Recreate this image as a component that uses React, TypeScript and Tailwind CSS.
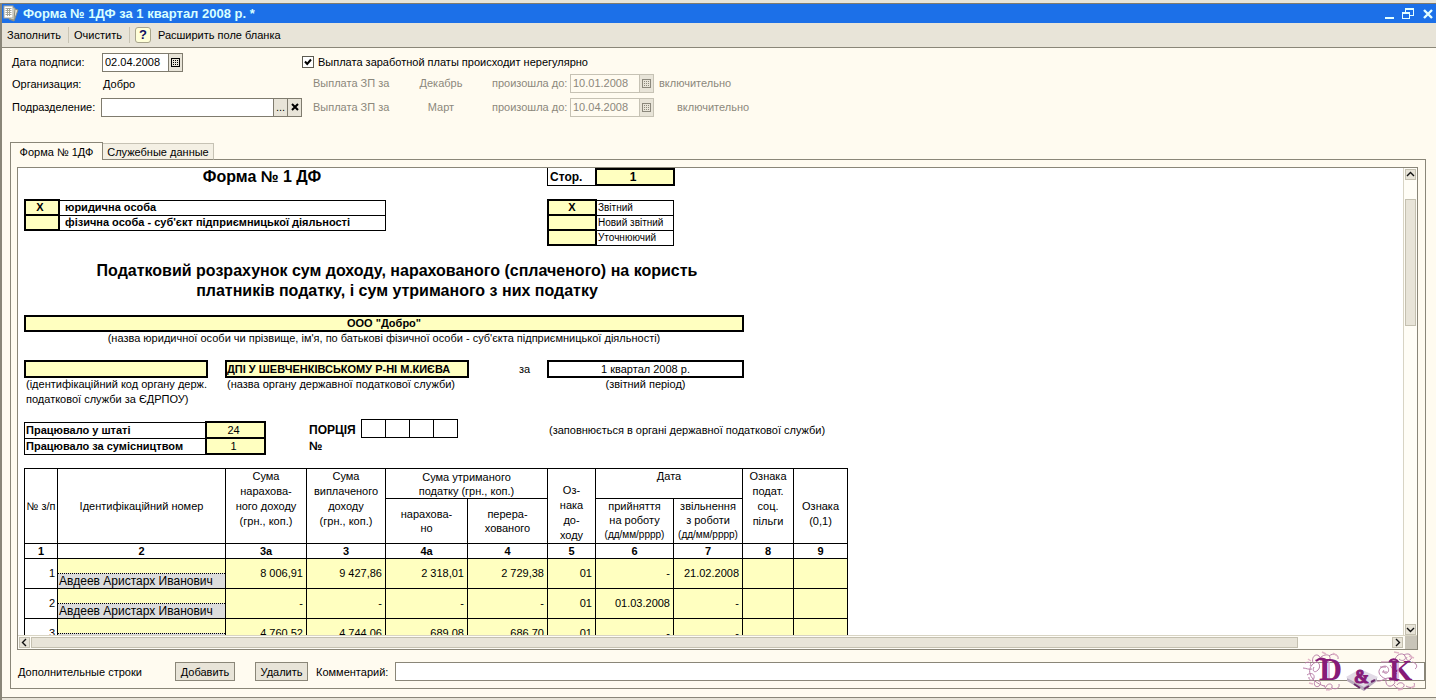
import { useState, type ReactNode } from "react";

type Row = { n: number; name: string; cells: string[] };

const ROWS: Row[] = [
  { n: 1, name: "Авдеев Аристарх Иванович", cells: ["8 006,91", "9 427,86", "2 318,01", "2 729,38", "01", "-", "21.02.2008", "", ""] },
  { n: 2, name: "Авдеев Аристарх Иванович", cells: ["-", "-", "-", "-", "01", "01.03.2008", "-", "", ""] },
  { n: 3, name: "", cells: ["4 760,52", "4 744,06", "689,08", "686,70", "01", "-", "-", "", ""] },
];

const COLUMN_NUMBERS = ["1", "2", "3а", "3", "4а", "4", "5", "6", "7", "8", "9"];

function CalendarIcon() {
  return (
    <svg width="9" height="9" viewBox="0 0 9 9" fill="none" stroke="currentColor" shapeRendering="crispEdges">
      <path d="M0 .5h9M.5 0v9M8.5 0v9M0 8.5h9" />
      <path d="M2 2.500h1M4 2.500h1M6 2.500h1M2 4.500h1M4 4.500h1M6 4.500h1M2 6.500h1M4 6.500h1M6 6.500h1" />
    </svg>
  );
}

function Chevron({ dir }: { dir: "up" | "down" | "left" | "right" }) {
  const d = {
    up: "M1 6l3.5-3.5L8 6",
    down: "M1 3l3.5 3.5L8 3",
    left: "M6 1L2.500 4.500 6 8",
    right: "M3 1l3.500 3.500L3 8",
  }[dir];
  return (
    <svg width="9" height="9" viewBox="0 0 9 9" fill="none" stroke="#111" strokeWidth="1.4">
      <path d={d} />
    </svg>
  );
}

function ScrollButton({ dir, label }: { dir: "up" | "down" | "left" | "right"; label: string }) {
  return (
    <button
      aria-label={label}
      className="flex h-[11px] w-[11px] shrink-0 items-center justify-center border border-[#c4c0b0] bg-[#e8e4d8]"
    >
      <Chevron dir={dir} />
    </button>
  );
}

function DateField({ id, value, disabled }: { id: string; value: string; disabled?: boolean }) {
  return (
    <div className={`flex h-[19px] border ${disabled ? "w-[84px] border-[#c6c2b4] text-[#8c887c]" : "w-[81px] border-[#7f7b6e] text-black"}`}>
      <input
        id={id}
        defaultValue={value}
        disabled={disabled}
        className={`min-w-0 flex-1 pl-[2px] outline-none ${disabled ? "bg-[#fffbf0]" : "bg-white"}`}
      />
      <button
        aria-label="Календарь"
        disabled={disabled}
        className={`flex w-[14px] items-center justify-center border-l bg-[#e8e4d8] ${disabled ? "border-[#c6c2b4]" : "border-[#7f7b6e]"}`}
      >
        <CalendarIcon />
      </button>
    </div>
  );
}

function PayRow({ id, month, date, wide }: { id: string; month: string; date: string; wide?: boolean }) {
  return (
    <div className="flex h-6 items-center pl-[11px] text-[#8c887c]">
      <span className="w-[90px]">Выплата ЗП за</span>
      <span className="w-[76px] text-center">{month}</span>
      <label htmlFor={id} className="w-[91px] pl-[13px]">произошла до:</label>
      <DateField id={id} value={date} disabled />
      <span className={wide ? "pl-[23px]" : "pl-[5px]"}>включительно</span>
    </div>
  );
}

function Head({ children, rows, cols, className = "align-middle" }: { children: ReactNode; rows?: number; cols?: number; className?: string }) {
  return (
    <th rowSpan={rows} colSpan={cols} className={`border border-black p-0 text-center font-normal whitespace-nowrap ${className}`}>
      {children}
    </th>
  );
}

function WindowIcon() {
  return (
    <svg width="16" height="17" viewBox="0 0 16 17">
      <path d="M9 3l6 2-4 11-5-2z" fill="#e4e0d0" stroke="#8d8d80" />
      <path d="M7 2l5 1-1 12-4-1z" fill="#f4f2e4" stroke="#8d8d80" />
      <rect x="1" y="1" width="9" height="12" fill="#fff" stroke="#a5a598" />
      <path d="M2.500 3.500h6M2.500 5.500h6M2.500 7.500h6M2.500 9.500h6M4.500 3v8M6.500 3v8" stroke="#a5a598" fill="none" />
    </svg>
  );
}

function Logo() {
  return (
    <svg width="120" height="44" viewBox="0 0 120 44" fill="none">
      <g stroke="#b97fa9">
        <path d="M22 36C10 32 4 22 10 15s10 1 6 5-6 0-4-3M11 13C9 7 14 3 17 6s-1 6-4 4M17 9c5-6 12-5 11 0s-7 4-5 0M27 6c5-4 10-1 9 3" />
        <path d="M3 13c4-2 7 0 5 3M1 18c3 0 6 2 9 1M5 25c4-3 8-1 7 3s-6 2-5-1M13 31c-2 4 1 7 4 5s1-6-1-5M22 35c2 6 7 6 8 2s-5-4-6 0M30 38c4 2 8 0 7-4" />
        <path d="M84 29c-8-3-9-9-4-12s8 2 6 5-6 0-4-2M79 12h7M78 17h6M80 22h5M93 10c1-6 8-8 10-4s-3 6-6 3M102 5c5-3 9 1 7 4s-6 1-4-2" />
        <path d="M84 29c-1 6 3 9 7 6s1-6-3-4M92 35c3 5 9 4 10 1s-5-5-7-1M104 36c5 3 10 1 8-3M110 12c5 1 6 5 3 7M75 31c5 1 8-4 14-3M88 15c3 4 5 8 7 9" />
      </g>
      <g stroke="#e3b6c8" strokeWidth="1.500">
        <path d="M20 2l4 2M31 3l4 3M6 9l3 2M7 33l4 1M24 40l6-1M92 2l5 1M107 6l5 2M96 40l5-1M109 38l4-2" />
      </g>
      <path d="M44 27l14-8 18 8-14 14z" fill="#e2dae6" />
      <path d="M45 28l17 9 13-9v3l-13 10-17-10z" fill="#b9acbd" />
      <path d="M52 34l6 4M62 39l5-3M69 32l4-2" stroke="#6d2a6b" strokeWidth="2" />
      <g fontFamily="'Liberation Serif', serif" fontWeight="700" fill="#861b78">
        <text x="17" y="30" fontSize="32">D</text>
        <text x="52" y="33" fontSize="18" stroke="#861b78">&amp;</text>
        <text x="87" y="30" fontSize="30">K</text>
      </g>
      <path d="M14 11c4-4 8-3 12 0M87 12c3-4 6-3 9-1M87 29c3-2 5 2 9 1" stroke="#861b78" strokeWidth="2" />
      <path d="M27 12v16M96 13v15" stroke="#d7a3d6" strokeWidth="1.500" />
    </svg>
  );
}

function Sheet() {
  return (
    <div className="w-[840px] pl-[6px] text-[11px] leading-[15px] text-black">
      <div className="flex h-[18px]">
        <h1 className="w-[523px] pr-[47px] text-center text-[16px] leading-[17px] font-bold">Форма № 1 ДФ</h1>
        <div className="w-12 border-b border-l border-black pl-[2px] text-[12px] leading-[18px] font-bold">Стор.</div>
        <div className="w-20 border-2 border-black bg-[#ffffc0] pr-1 text-center text-[12px] leading-[15px] font-bold">1</div>
      </div>

      <div className="mt-[13px] flex h-[46px] items-start">
        <table className="w-[362px] table-fixed border-collapse">
          <tbody>
            <tr className="h-[15px]">
              <td className="w-[34px] border-2 border-black bg-[#ffffc0] p-0 pr-1 text-center leading-[13px] font-bold">X</td>
              <td className="border border-black p-0 pl-[5px] leading-[13px] font-bold">юридична особа</td>
            </tr>
            <tr className="h-[15px]">
              <td className="border-2 border-black bg-[#ffffc0] p-0" />
              <td className="border border-black p-0 pl-[5px] leading-[13px] font-bold">фізична особа - суб'єкт підприємницької діяльності</td>
            </tr>
          </tbody>
        </table>
        <table className="ml-[161px] w-[127px] table-fixed border-collapse text-[10px]">
          <tbody>
            {["Звітний", "Новий звітний", "Уточнюючий"].map((kind, i) => (
              <tr key={kind} className="h-[15px]">
                <td className="w-12 border-2 border-black bg-[#ffffc0] p-0 text-center text-[11px] leading-[13px] font-bold">{i === 0 && "X"}</td>
                <td className="border border-black p-0 pl-px leading-[13px]">{kind}</td>
              </tr>
            ))}
          </tbody>
        </table>
      </div>

      <h2 className="mt-4 w-[746px] text-center text-[16px] leading-5 font-bold">
        Податковий розрахунок сум доходу, нарахованого (сплаченого) на користь
        <br />
        платників податку, і сум утриманого з них податку
      </h2>

      <div className="mt-[14px] h-[17px] w-[720px] border-2 border-black bg-[#ffffc0] text-center leading-[13px] font-bold">ООО "Добро"</div>
      <p className="w-[720px] text-center leading-[13px]">
        (назва юридичної особи чи прізвище, ім'я, по батькові фізичної особи - суб'єкта підприємницької діяльності)
      </p>

      <div className="mt-[15px] flex h-[46px]">
        <div className="w-[184px]">
          <div className="h-[18px] border-2 border-black bg-[#ffffc0]" />
          <p className="-mt-px pl-[2px] whitespace-nowrap">(ідентифікаційний код органу держ.<br />податкової служби за ЄДРПОУ)</p>
        </div>
        <div className="ml-[17px] w-[244px]">
          <div className="h-[18px] border-2 border-black bg-[#ffffc0] leading-[15px] font-bold whitespace-nowrap">ДПІ У ШЕВЧЕНКІВСЬКОМУ Р-НІ М.КИЄВА</div>
          <p className="-mt-px pl-[2px]">(назва органу державної податкової служби)</p>
        </div>
        <span className="w-[78px] pl-[50px] leading-[18px]">за</span>
        <div className="w-[197px] text-center">
          <div className="h-[18px] border-2 border-black leading-[15px]">1 квартал 2008 р.</div>
          <p className="-mt-px">(звітний період)</p>
        </div>
      </div>

      <div className="mt-[13px] flex h-[49px] items-start">
        <table className="mt-[2px] w-[242px] table-fixed border-collapse">
          <tbody>
            {[["Працювало у штаті", "24"], ["Працювало за сумісництвом", "1"]].map(([label, value]) => (
              <tr key={label} className="h-4">
                <td className="border border-black p-0 pl-px leading-[14px] font-bold">{label}</td>
                <td className="w-[59px] border-2 border-black bg-[#ffffc0] p-0 pr-1 text-center leading-[14px]">{value}</td>
              </tr>
            ))}
          </tbody>
        </table>
        <p className="ml-[43px] w-[52px] pt-[3px] text-[12px] leading-4 font-bold">ПОРЦІЯ<br />№</p>
        <div className="flex h-[19px] w-[97px] divide-x divide-black border border-black">
          <div className="flex-1" /><div className="flex-1" /><div className="flex-1" /><div className="flex-1" />
        </div>
        <p className="ml-[91px] pt-1">(заповнюється в органі державної податкової служби)</p>
      </div>

      <table className="w-[824px] table-fixed border-collapse">
        <colgroup>
          <col className="w-[33px]" />
          <col className="w-[168px]" />
          <col className="w-[81px]" />
          <col className="w-[79px]" />
          <col className="w-[82px]" />
          <col className="w-[80px]" />
          <col className="w-[48px]" />
          <col className="w-[78px]" />
          <col className="w-[69px]" />
          <col className="w-[51px]" />
          <col className="w-[54px]" />
        </colgroup>
        <thead>
          <tr className="h-[30px]">
            <Head rows={2}>№ з/п</Head>
            <Head rows={2}>Ідентифікаційний номер</Head>
            <Head rows={2} className="align-top">Сума<br />нарахова-<br />ного доходу<br />(грн., коп.)</Head>
            <Head rows={2} className="align-top">Сума<br />виплаченого<br />доходу<br />(грн., коп.)</Head>
            <Head cols={2} className="leading-[14px]">Сума утриманого<br />податку (грн., коп.)</Head>
            <Head rows={2} className="pt-[14px] align-top">Оз-<br />нака<br />до-<br />ходу</Head>
            <Head cols={2} className="align-top">Дата</Head>
            <Head rows={2} className="align-top">Ознака<br />подат.<br />соц.<br />пільги</Head>
            <Head rows={2} className="pt-[15px]">Ознака<br />(0,1)</Head>
          </tr>
          <tr className="h-[45px]">
            <Head className="leading-[14px]">нарахова-<br />но</Head>
            <Head className="leading-[14px]">перера-<br />хованого</Head>
            <Head className="align-top leading-[14px]">прийняття<br />на роботу<br /><span className="text-[10px]">(дд/мм/рррр)</span></Head>
            <Head className="align-top leading-[14px]">звільнення<br />з роботи<br /><span className="text-[10px]">(дд/мм/рррр)</span></Head>
          </tr>
          <tr className="h-[15px]">
            {COLUMN_NUMBERS.map((c) => (
              <th key={c} className="border border-black p-0 text-center leading-[14px] font-bold">{c}</th>
            ))}
          </tr>
        </thead>
        <tbody>
          {ROWS.map((row) => (
            <tr key={row.n} className="h-[30px]">
              <td className="border border-black p-0 pr-[2px] pb-[2px] text-right leading-[14px]">{row.n}</td>
              <td className="border border-black bg-[#ffffc0] p-0 align-bottom">
                <div className="h-[15px] border-t border-dotted border-black bg-[#dcdcdc] pl-px text-[12px] leading-[14px]">{row.name}</div>
              </td>
              {row.cells.map((cell, i) => (
                <td key={i} className="border border-black bg-[#ffffc0] p-0 pr-[3px] pb-[2px] text-right leading-[14px]">{cell}</td>
              ))}
            </tr>
          ))}
        </tbody>
      </table>
    </div>
  );
}

export default function App() {
  const [irregular, setIrregular] = useState(true);

  return (
    <div className="flex h-screen flex-col overflow-hidden bg-[#e8e4d8] pt-[3px] font-['Liberation_Sans',Arial,sans-serif] text-[11px] leading-4 text-black">
      <div className="flex min-h-0 flex-1 flex-col border-l-2 border-[#8a8678] bg-[#fffbf0]">
        <header className="flex h-5 shrink-0 items-center border-t border-[#7f7b6e] bg-[#1c70e8] pr-[2px] pl-px">
          <WindowIcon />
          <span className="ml-1 text-[13px] font-bold text-[#d8ffff]">Форма № 1ДФ за 1 квартал 2008 р. *</span>
          <div className="ml-auto flex items-center gap-2">
            <button aria-label="Свернуть" className="h-[11px] w-[9px] border-b-2 border-[#e4ffff]" />
            <button aria-label="Восстановить">
              <svg width="12" height="12" viewBox="0 0 12 12" fill="none" stroke="#e4ffff" shapeRendering="crispEdges">
                <path d="M3.500 4V1.500h8v6H8M3 .5h9M.5 4.500h7v6h-7zM0 5.500h8" />
              </svg>
            </button>
            <button aria-label="Закрыть">
              <svg width="12" height="12" viewBox="0 0 12 12" fill="none" stroke="#e4ffff" strokeWidth="2.400">
                <path d="M2 2l8 8M10 2l-8 8" />
              </svg>
            </button>
          </div>
        </header>

        <nav className="flex h-[25px] shrink-0 items-center border-b border-[#8a8678] bg-[#e8e4d8] pl-[5px]">
          <button>Заполнить</button>
          <button className="ml-[7px] border-l border-[#c8c4b4] pl-[5px]">Очистить</button>
          <div className="ml-[7px] flex border-l border-[#c8c4b4] pl-[5px]">
            <button aria-label="Справка" className="h-4 w-4 rounded-[3px] border border-[#a8a48c] bg-[#ffffd8] text-[13px] leading-[14px] font-bold text-[#101060]">?</button>
          </div>
          <button className="ml-[7px]">Расширить поле бланка</button>
        </nav>

        <div className="flex h-[94px] shrink-0 pt-[3px] pl-[10px] whitespace-nowrap">
          <div className="w-[290px]">
            <div className="flex h-[22px] items-center">
              <label htmlFor="sign-date" className="w-[90px]">Дата подписи:</label>
              <DateField id="sign-date" value="02.04.2008" />
            </div>
            <div className="flex h-[22px] items-center">
              <span className="w-[91px]">Организация:</span>
              <span>Добро</span>
            </div>
            <div className="flex h-6 items-center">
              <label htmlFor="department" className="w-[89px]">Подразделение:</label>
              <div className="flex h-[19px] w-[201px] border border-[#7f7b6e]">
                <input id="department" className="min-w-0 flex-1 bg-white pl-[2px] outline-none" />
                <button aria-label="Выбрать" className="w-[14px] border-l border-[#7f7b6e] bg-[#e8e4d8] leading-3">...</button>
                <button aria-label="Очистить поле" className="flex w-[14px] items-center justify-center border-l border-[#7f7b6e] bg-[#e8e4d8]">
                  <svg width="8" height="8" viewBox="0 0 8 8" stroke="#000" strokeWidth="2"><path d="M1 1l6 6M7 1L1 7" /></svg>
                </button>
              </div>
            </div>
          </div>
          <div>
            <label className="flex h-5 items-center gap-1 pt-[2px]">
              <span className="relative flex">
                <input
                  type="checkbox"
                  checked={irregular}
                  onChange={(e) => setIrregular(e.target.checked)}
                  className="h-3 w-3 appearance-none border border-[#5c5a50] bg-white"
                />
                {irregular && (
                  <svg width="12" height="12" viewBox="0 0 12 12" fill="none" stroke="#000" strokeWidth="2" className="pointer-events-none absolute inset-0">
                    <path d="M3 5.500l2.200 2.500L9 3.500" />
                  </svg>
                )}
              </span>
              Выплата заработной платы происходит нерегулярно
            </label>
            <PayRow id="pay-dec" month="Декабрь" date="10.01.2008" />
            <PayRow id="pay-mar" month="Март" date="10.04.2008" wide />
          </div>
        </div>

        <div className="flex min-h-0 flex-1 flex-col pr-[10px] pb-2 pl-2">
          <div className="z-10 -mb-px flex h-[18px] shrink-0 items-end" role="tablist">
            <button role="tab" aria-selected="true" className="h-[18px] w-[93px] border border-b-0 border-[#8a8678] bg-[#fffbf0] whitespace-nowrap">Форма № 1ДФ</button>
            <button role="tab" aria-selected="false" className="h-[17px] w-[111px] border border-l-0 border-[#c6c2b4] border-b-[#8a8678] bg-[#f4f0e4] whitespace-nowrap">Служебные данные</button>
          </div>

          <div className="flex min-h-0 flex-1 flex-col border border-[#8a8678] pt-[7px]">
            <div className="mr-[7px] ml-[6px] flex min-h-0 flex-1 flex-col border border-[#8a8678] bg-white">
              <div className="flex min-h-0 flex-1">
                <div className="min-w-0 flex-1 overflow-hidden">
                  <Sheet />
                </div>
                <div className="flex w-[14px] shrink-0 flex-col items-center border-l border-[#d8d4c4] bg-[#fffdf6] pt-px">
                  <ScrollButton dir="up" label="Вверх" />
                  <div className="mt-[19px] h-[127px] w-[11px] border border-[#c4c0b0] bg-[#e8e4d8]" />
                  <div className="mt-auto">
                    <ScrollButton dir="down" label="Вниз" />
                  </div>
                </div>
              </div>
              <div className="flex h-[14px] shrink-0 items-center border-t border-[#d8d4c4] bg-[#fffdf6] pl-px">
                <ScrollButton dir="left" label="Влево" />
                <div className="mr-[94px] ml-px h-[11px] flex-1 border border-[#c4c0b0] bg-[#e8e4d8]" />
                <ScrollButton dir="right" label="Вправо" />
                <div className="ml-[2px] h-full w-3 bg-[#c8c4b8]" />
              </div>
            </div>

            <div className="relative flex h-[38px] shrink-0 items-center pt-[5px] pl-[7px] whitespace-nowrap">
              <span className="w-[157px]">Дополнительные строки</span>
              <button className="h-[19px] w-[60px] border border-[#8a8678] bg-[#e8e4d8] leading-4">Добавить</button>
              <button className="ml-5 h-[19px] w-[53px] border border-[#8a8678] bg-[#e8e4d8] leading-4">Удалить</button>
              <label htmlFor="comment" className="ml-2 w-[79px]">Комментарий:</label>
              <input id="comment" className="h-[19px] min-w-0 flex-1 border border-[#8a8678] bg-white px-1 outline-none" />
              <div className="pointer-events-none absolute right-[3px] bottom-[-6px]">
                <Logo />
              </div>
            </div>
          </div>
        </div>
        <div className="h-[3px] shrink-0 border-t border-[#8a8678] bg-[#e8e4d8]" />
      </div>
    </div>
  );
}
